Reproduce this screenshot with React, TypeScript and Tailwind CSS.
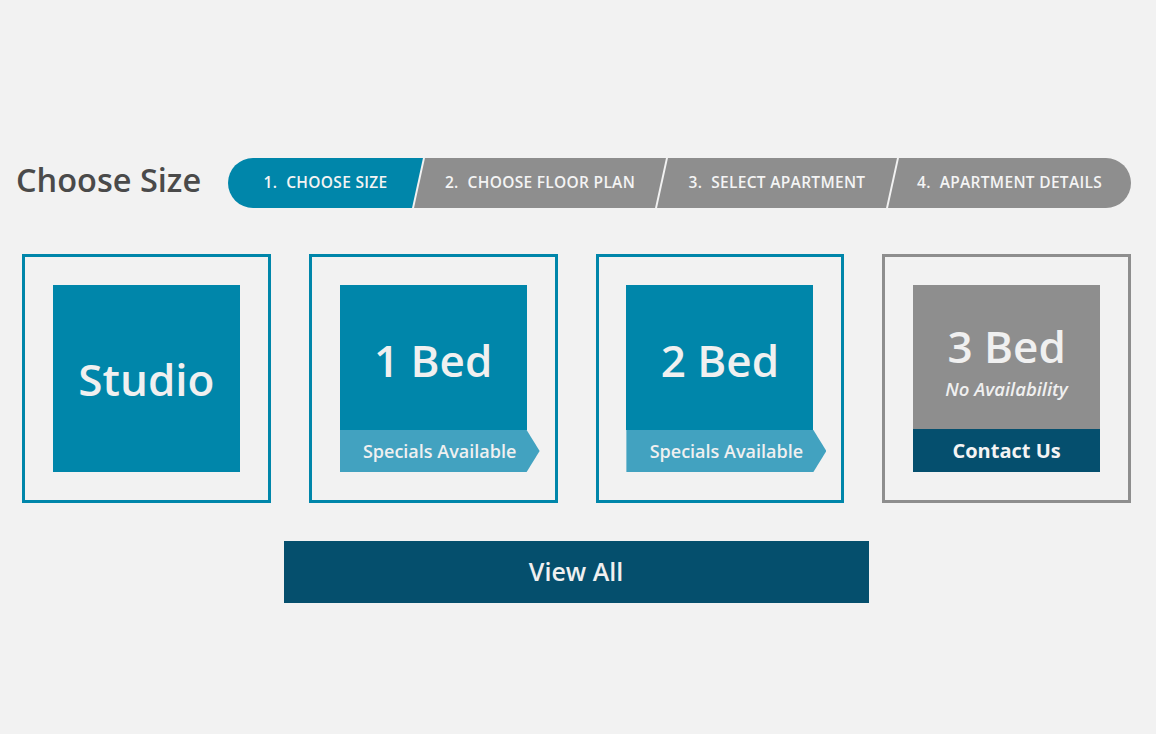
const steps = [
  { label: "1.", text: "CHOOSE SIZE", w: "w-[195px]", active: true },
  { label: "2.", text: "CHOOSE FLOOR PLAN", w: "w-[252px]", active: false },
  { label: "3.", text: "SELECT APARTMENT", w: "w-[240px]", active: false },
  { label: "4.", text: "APARTMENT DETAILS", w: "w-[243px]", active: false },
];

function StepBar() {
  return (
    <div className="flex w-[903px] h-[50px] rounded-full overflow-hidden">
      {steps.map((s, i) => {
        let shape = "[clip-path:polygon(11px_0,100%_0,calc(100%_-_11px)_100%,0_100%)]";
        if (i === 0) shape = "[clip-path:polygon(0_0,100%_0,calc(100%_-_11px)_100%,0_100%)]";
        if (i === steps.length - 1) shape = "[clip-path:polygon(11px_0,100%_0,100%_100%,0_100%)]";
        return (
          <div
            key={s.text}
            className={`${s.w} shrink-0 h-full flex items-center justify-center text-[#f4f4f4] text-[15.5px] tracking-[0.3px] font-semibold ${shape} ${
              s.active ? "bg-[#0086aa]" : "bg-[#8e8e8e]"
            } ${i > 0 ? "-ml-[9px]" : ""}`}
          >
            <span className="mr-[9px]">{s.label}</span>
            <span>{s.text}</span>
          </div>
        );
      })}
    </div>
  );
}

function Card({ children, gray }: { children: React.ReactNode; gray?: boolean }) {
  return (
    <div
      className={`h-[249px] border-[3px] flex items-center justify-center ${
        gray ? "border-[#8e8e8e]" : "border-[#0086aa]"
      }`}
    >
      {children}
    </div>
  );
}

function Ribbon() {
  return (
    <div className="w-[200px] -mr-[13px] h-[42px] shrink-0 bg-[#42a2c0] flex items-center justify-center text-[#f0f0f0] text-[18px] font-semibold [clip-path:polygon(0_0,calc(100%_-_13px)_0,100%_50%,calc(100%_-_13px)_100%,0_100%)]">
      Specials Available
    </div>
  );
}

export default function App() {
  return (
    <div className="min-h-[734px] w-full bg-[#f2f2f2] font-['Open_Sans',sans-serif] pt-[158px]">
      <div className="w-[1156px]">
        <div className="flex items-center pl-[16px] pr-[25px]">
          <h1 className="text-[32.5px] font-semibold text-[#4a4a4a] leading-none -mt-[6px]">Choose Size</h1>
          <div className="ml-auto">
            <StepBar />
          </div>
        </div>

        <div className="grid grid-cols-4 gap-x-[38px] mt-[46px] pl-[22px] pr-[25px]">
          <Card>
            <div className="w-[187px] h-[187px] bg-[#0086aa] flex items-center justify-center text-[#f0f0f0] text-[44px] font-semibold">
              Studio
            </div>
          </Card>
          <Card>
            <div className="w-[187px] h-[187px] flex flex-col">
              <div className="flex-1 bg-[#0086aa] flex items-center justify-center text-[#f0f0f0] text-[44px] font-semibold pt-[4px]">
                1 Bed
              </div>
              <Ribbon />
            </div>
          </Card>
          <Card>
            <div className="w-[187px] h-[187px] flex flex-col">
              <div className="flex-1 bg-[#0086aa] flex items-center justify-center text-[#f0f0f0] text-[44px] font-semibold pt-[4px]">
                2 Bed
              </div>
              <Ribbon />
            </div>
          </Card>
          <Card gray>
            <div className="w-[187px] h-[187px] flex flex-col">
              <div className="flex-1 bg-[#8e8e8e] flex flex-col items-center justify-center text-[#f0f0f0]">
                <div className="text-[44px] font-semibold leading-none mt-[8px]">3 Bed</div>
                <div className="text-[18.5px] italic font-semibold mt-[12px] leading-none">No Availability</div>
              </div>
              <div className="h-[43px] bg-[#054f6e] flex items-center justify-center text-[#f4f4f4] text-[20px] font-bold">
                Contact Us
              </div>
            </div>
          </Card>
        </div>

        <div className="flex justify-center mt-[38px] pr-[4px]">
          <button className="w-[585px] h-[62px] bg-[#054f6d] text-[#f0f0f0] text-[25px] font-semibold">
            View All
          </button>
        </div>
      </div>
    </div>
  );
}
